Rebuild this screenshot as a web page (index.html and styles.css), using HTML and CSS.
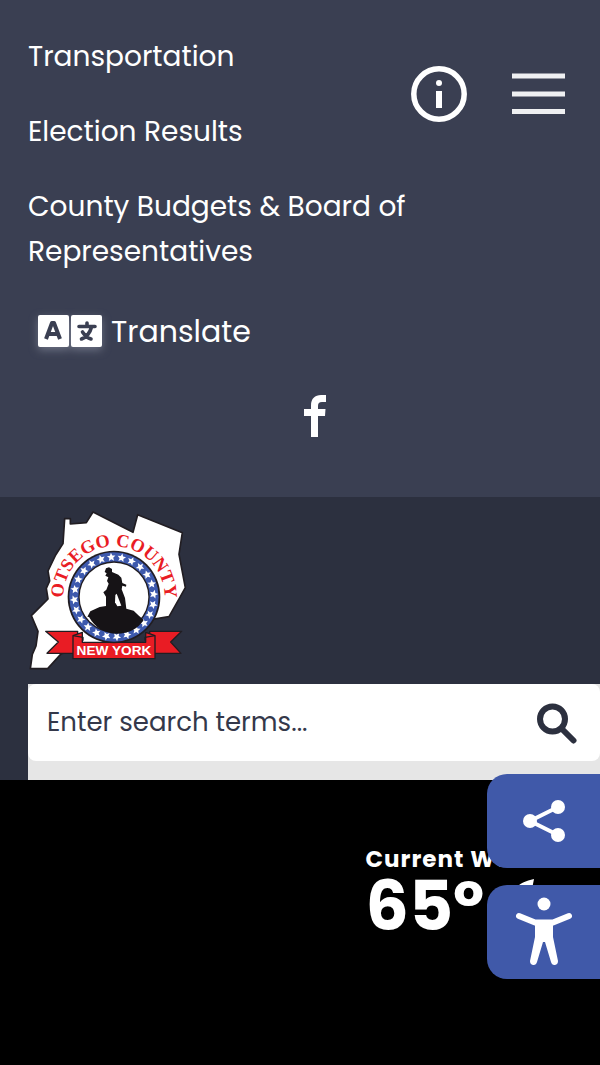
FILE: index.html
```
<!DOCTYPE html>
<html lang="en">
<head>
<meta charset="utf-8">
<meta name="viewport" content="width=device-width, initial-scale=1">
<title>Otsego County, New York</title>
<link rel="stylesheet" href="styles.css">
</head>
<body>
<header class="topbar">
  <div class="topbar-main">
    <nav class="quick-links" aria-label="Quick links">
      <a href="#transportation">Transportation</a>
      <a href="#elections">Election Results</a>
      <a href="#budgets">County Budgets &amp; Board of Representatives</a>
    </nav>
    <div class="topbar-actions">
      <button class="icon-button" type="button" aria-label="Information">
        <svg width="56" height="56" viewBox="0 0 56 56"><circle cx="28" cy="28" r="25.2" fill="none" stroke="#fff" stroke-width="5.5"/><circle cx="28" cy="17" r="3" fill="#fff"/><path d="M25 25h6v17h-6z" fill="#fff"/></svg>
      </button>
      <button class="icon-button" type="button" aria-label="Menu">
        <svg width="53" height="44" viewBox="0 0 53 44"><path d="M0 4h53M0 22h53M0 39.500h53" stroke="#eff0f2" stroke-width="5"/></svg>
      </button>
    </div>
  </div>
  <a class="translate" href="#translate">
    <svg class="translate-icon" width="64" height="33" viewBox="0 0 64 33">
      <rect width="31" height="32" rx="2" fill="#fff"/><rect x="33" width="31" height="32" rx="2" fill="#fff"/>
      <path d="M8 24 14 8h2l6 16M10.500 19h9.500" fill="none" stroke="#3a3f52" stroke-width="4" stroke-linejoin="round"/>
      <path d="M41 11.500h16M49 8v3M53.500 12c-1.500 6-5 10-10 12M44.500 17c2 3 5 6 8.500 7" fill="none" stroke="#3a3f52" stroke-width="3.600" stroke-linecap="round"/>
    </svg>
    <span>Translate</span>
  </a>
  <div class="social">
    <a href="#facebook" aria-label="Facebook">
      <svg width="22" height="42" viewBox="0 0 22 42"><path d="M7 42V21H0v-7h7V10.500C7 3.500 11 0 17 0h5v7h-4c-3 0-4 1.500-4 4v3h7.500l-.5 7H14v21z" fill="#fff"/></svg>
    </a>
  </div>
</header>

<section class="masthead">
  <a class="logo" href="#home" aria-label="Otsego County, New York">
    <svg width="160" height="162" viewBox="25 32 480 486">
      <defs>
        <path id="name-arc" d="M131 323v-30a152 152 0 0 1 304 0v30"/>
        <path id="star" d="m283 160 3.600 8.500 9.200.8-7 6.100 2.100 9-7.900-4.800-7.900 4.800 2.100-9-7-6.100 9.200-.8z"/>
        <g id="stars">
          <use href="#star" transform="rotate(-4 283 293)"/>
          <use href="#star" transform="rotate(11 283 293)"/>
          <use href="#star" transform="rotate(26 283 293)"/>
          <use href="#star" transform="rotate(41 283 293)"/>
          <use href="#star" transform="rotate(56 283 293)"/>
          <use href="#star" transform="rotate(71 283 293)"/>
        </g>
      </defs>
      <path d="M135 58h17v16l48-4 20-32 120 61 14-53 134 54-10 65 19 100-18 32-31 55-55 9-170 80-98 22-41 45H32l6-43 11-25 6-44-20-47 36-36 14-14-5-32 10-22-5-30 23-48 22-34z" fill="#fff" stroke="#211d22" stroke-width="5" stroke-linejoin="round"/>
      <g fill="#e91c24" stroke="#211d22" stroke-width="4" stroke-linejoin="round">
        <path d="M78 396h96v66H82l34-34zM486 396h-96v66h94l-31-34z"/>
        <path d="m160 409 28-10v30h190v-30l28 10v69H160z"/>
        <path d="M160 409l30 5v10M406 409l-30 5v10" fill="none"/>
      </g>
      <circle cx="283" cy="293" r="139" fill="#211d22"/>
      <circle cx="283" cy="293" r="134" fill="#3d59ad"/>
      <circle cx="283" cy="293" r="107" fill="#211d22"/>
      <circle cx="283" cy="293" r="103" fill="#fff"/>
      <g fill="#fff"><use href="#stars"/><use href="#stars" transform="rotate(90 283 293)"/><use href="#stars" transform="rotate(180 283 293)"/><use href="#stars" transform="rotate(270 283 293)"/></g>
      <path d="M203 352l9-16 28-13 19-3v-28l-8-13 9-8 7-18-5-8 4-11-9-5 4-7-6-4 4-11 9-3 9 5v9l19 8 9 9 3 16 12 5-1 6-11-3-2 11 10 26 4 32 22 6 14 14 16 14q-27 41-81 41-54 0-83-50z" fill="#161316"/>
      <path d="m287 287 4-4 14 36-12 2-7-12z" fill="#fff"/>
      <text class="logo-name"><textPath href="#name-arc" startOffset="269" text-anchor="middle">OTSEGO COUNTY</textPath></text>
      <text class="logo-state" x="283" y="468" text-anchor="middle">NEW YORK</text>
    </svg>
  </a>
  <div class="search-panel">
    <form class="search" role="search">
      <input class="search-input" type="search" aria-label="Search" placeholder="Enter search terms...">
      <button class="icon-button" type="submit" aria-label="Submit search">
        <svg width="42" height="42" viewBox="0 0 42 42"><circle cx="16.500" cy="17" r="12.500" fill="none" stroke="#2c303f" stroke-width="6"/><path d="m26 27 11.500 11.500" stroke="#2c303f" stroke-width="6" stroke-linecap="round"/></svg>
      </button>
    </form>
  </div>
</section>

<main class="hero">
  <section class="weather" aria-label="Current weather">
    <h2 class="weather-title">Current Weather</h2>
    <div class="weather-now">
      <span>65º</span>
      <svg width="56" height="56" viewBox="0 0 56 56"><path d="M26 0C10 3 0 13 0 28s12 27 28 27c12 0 20-6 25-14-20 5-36-9-29-31z" fill="#fff"/></svg>
    </div>
  </section>
</main>

<aside class="side-tools">
  <button class="side-button" type="button" aria-label="Share">
    <svg width="42" height="42" viewBox="0 0 42 42"><path d="M35 7 7 21l28 14" fill="none" stroke="#fff" stroke-width="4"/><g fill="#fff"><circle cx="7" cy="21" r="7"/><circle cx="35" cy="7" r="7"/><circle cx="35" cy="35" r="7"/></g></svg>
  </button>
  <button class="side-button" type="button" aria-label="Accessibility options">
    <svg width="58" height="70" viewBox="0 0 58 70"><circle cx="29" cy="7" r="6.500" fill="#fff"/><path d="M4 19 20 25.500H38L54 19" fill="none" stroke="#fff" stroke-width="6" stroke-linecap="round" stroke-linejoin="round"/><path d="M20 23h18v17l5 24q0 3.500-3 4t-4-3L30 45h-2l-6 20q-1 3.500-4 3t-3-4l5-24z" fill="#fff"/></svg>
  </button>
</aside>
</body>
</html>
```
FILE: styles.css
```
* { box-sizing: border-box; }

body {
  margin: 0;
  min-height: 100vh;
  background: #000;
  color: #fff;
  font-family: Poppins, Inter, "Open Sans", sans-serif;
  font-size: 28px;
  line-height: 45px;
}

a { color: inherit; text-decoration: none; }
svg { display: block; }

.icon-button {
  padding: 0;
  border: 0;
  background: none;
  cursor: pointer;
}

.topbar {
  display: flex;
  flex-direction: column;
  padding: 34px 0 60px 28px;
  background: #3a3f52;
}

.topbar-main {
  display: flex;
  align-items: flex-start;
  justify-content: space-between;
  padding-right: 35px;
}

.quick-links {
  display: flex;
  flex: 1;
  flex-direction: column;
  gap: 30px;
}

/* The wrapped link text may run underneath the action icons. */
.quick-links a { margin-right: -32px; }

.topbar-actions {
  display: flex;
  align-items: center;
  gap: 45px;
  padding-top: 32px;
}

.translate {
  display: flex;
  align-items: center;
  gap: 9px;
  margin-top: 35px;
  padding-left: 10px;
  font-size: 30px;
}

.translate-icon { filter: drop-shadow(0 3px 4px #6c7183); }

.social {
  display: flex;
  justify-content: center;
  margin-top: 41px;
  padding-left: 2px;
}

.masthead {
  padding: 13px 0 0 28px;
  background: #2c303f;
}

.logo { display: block; }

.logo-name {
  fill: #e91c24;
  font: bold 55px "Liberation Serif", serif;
}

.logo-state {
  fill: #fff;
  font: bold 41px "Liberation Sans", sans-serif;
}

.search-panel {
  margin-top: 12px;
  padding-bottom: 19px;
  background: #e6e6e6;
}

.search {
  display: flex;
  align-items: center;
  height: 77px;
  padding: 0 22px 0 19px;
  border-radius: 8px;
  background: #fff;
}

.search-input {
  flex: 1;
  min-width: 0;
  padding: 0;
  border: 0;
  background: none;
  color: #2c303f;
  font: inherit;
  font-size: 26px;
}

.search-input::placeholder { color: #34384a; opacity: 1; }

.hero {
  display: flex;
  justify-content: flex-end;
  padding: 64px 20px 0;
}

.weather-title {
  margin: 0;
  font-size: 23px;
  font-weight: 700;
  line-height: 30px;
  letter-spacing: 1px;
}

.weather-now {
  display: flex;
  align-items: center;
  gap: 24px;
  font-size: 68px;
  font-weight: 700;
  line-height: 66px;
}

.side-tools {
  position: fixed;
  top: 774px;
  right: 0;
  display: grid;
  gap: 17px;
}

.side-button {
  display: grid;
  place-items: center;
  width: 113px;
  height: 94px;
  padding: 0;
  border: 0;
  border-radius: 20px 0 0 20px;
  background: #4059a9;
  cursor: pointer;
}
```
